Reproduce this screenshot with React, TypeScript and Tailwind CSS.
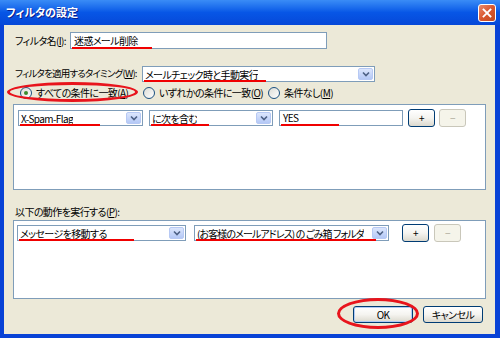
import React from "react";

const font = "font-['MS_UI_Gothic','Noto_Sans_CJK_JP',sans-serif] [font-feature-settings:'palt'] tracking-[-0.6px]";

type MarkProps = { w: number; left?: number };

// red hand-drawn underline from the annotation
const Underline = ({ w, left = 1 }: MarkProps) => (
  <span
    className="absolute bottom-[-1px] h-[2px] bg-[#F00000]"
    style={{ width: w, left }}
  />
);

const Arrow = () => (
  <span className="flex h-full w-[15px] shrink-0 items-center justify-center rounded-[2px] border border-[#B7C9F4] bg-gradient-to-b from-[#DCE6FC] to-[#B4C8F6]">
    <svg width="8" height="6" viewBox="0 0 8 6">
      <path d="M1 1.5 L4 4.5 L7 1.5" fill="none" stroke="#4D6185" strokeWidth="1.6" />
    </svg>
  </span>
);

const Select = ({ text, w, line, tight }: { text: string; w: number; line?: number; tight?: boolean }) => (
  <div
    className="relative flex h-[16px] shrink-0 items-center justify-between gap-[1px] border border-[#7F9DB9] bg-white py-[1px] pl-[2px] pr-[1px]"
    style={{ width: w }}
  >
    <span
      className={
        "overflow-hidden whitespace-nowrap text-[10px] leading-[13px] text-black" +
        (tight ? " tracking-[-0.9px]" : "")
      }
    >
      {text}
    </span>
    <Arrow />
    {line ? <Underline w={line} /> : null}
  </div>
);

const Btn = ({ label, w, h, disabled, focus }: { label: string; w: number; h: number; disabled?: boolean; focus?: boolean }) => (
  <div
    className={
      "flex shrink-0 items-center justify-center whitespace-nowrap rounded-[3px] border text-[10px] leading-none " +
      (disabled
        ? "border-[#C9C7BA] bg-[#F5F4EA] text-[#ACA899]"
        : "border-[#003C74] bg-gradient-to-b from-white via-[#F5F4F0] to-[#DCD9CE] text-black") +
      (focus ? " shadow-[inset_0_0_0_1px_#B2CBF4]" : "")
    }
    style={{ width: w, height: h }}
  >
    {label}
  </div>
);

const Radio = ({ checked }: { checked?: boolean }) => (
  <span className="flex h-[12px] w-[12px] shrink-0 items-center justify-center rounded-full border border-[#1C5180] bg-gradient-to-br from-[#DCDCD6] to-white">
    {checked && <span className="h-[4px] w-[4px] rounded-full bg-[#3B8B2D]" />}
  </span>
);

export default function App() {
  return (
    <div className={"flex h-[338px] w-[500px] flex-col overflow-hidden bg-[#0842D6] " + font}>
      {/* title bar */}
      <div className="flex h-[25px] shrink-0 items-center justify-between bg-gradient-to-b from-[#3A8CF6] via-[#0756E6] to-[#0648D8] pl-[6px] pr-[4px]">
        <span className="whitespace-nowrap text-[11px] font-bold leading-none tracking-normal text-white [text-shadow:1px_1px_0_#0A1E8C]">
          フィルタの設定
        </span>
        <span className="flex h-[18px] w-[18px] items-center justify-center rounded-[3px] border border-white bg-gradient-to-br from-[#E98A6B] via-[#D9572E] to-[#C14A21]">
          <svg width="10" height="10" viewBox="0 0 10 10">
            <path d="M1.5 1.5 L8.5 8.5 M8.5 1.5 L1.5 8.5" stroke="white" strokeWidth="1.8" strokeLinecap="square" />
          </svg>
        </span>
      </div>

      {/* body */}
      <div className="relative mb-[4px] ml-[4px] mr-[5px] flex flex-1 flex-col whitespace-nowrap bg-[#ECE9D8] px-[9px] text-[10px] text-black">
        {/* filter name */}
        <div className="mt-[7px] flex h-[17px] items-center">
          <span className="w-[57px] shrink-0 pl-[2px] leading-none">フィルタ名(<u>I</u>):</span>
          <div className="relative flex h-[17px] w-[257px] items-center border border-[#7F9DB9] bg-white pl-[3px]">
            <span className="leading-none">迷惑メール削除</span>
            <Underline w={80} />
          </div>
        </div>

        {/* timing */}
        <div className="mt-[17px] flex h-[16px] items-center">
          <span className="w-[129px] shrink-0 pl-[2px] text-[9.5px] leading-none tracking-[-0.8px]">
            フィルタを適用するタイミング(<u>W</u>):
          </span>
          <Select text="メールチェック時と手動実行" w={233} line={122} />
        </div>

        {/* radios */}
        <div className="relative mt-[2px] flex h-[18px] items-center">
          <span className="flex w-[130px] shrink-0 items-center gap-[4px] pl-[7px] leading-none">
            <Radio checked />
            <span>すべての条件に一致(<u>A</u>)</span>
          </span>
          <span className="flex w-[125px] shrink-0 items-center gap-[4px] leading-none">
            <Radio />
            <span>いずれかの条件に一致(<u>O</u>)</span>
          </span>
          <span className="flex shrink-0 items-center gap-[4px] leading-none">
            <Radio />
            <span>条件なし(<u>M</u>)</span>
          </span>
          <span className="absolute left-[-6px] top-[-2px] h-[20px] w-[131px] rounded-[50%] border-[3px] border-[#E8141C]" />
        </div>

        {/* conditions box */}
        <div className="mt-[2px] h-[86px] shrink-0 border border-[#7F9DB9] bg-white pl-[4px] pt-[4px]">
          <div className="flex items-center">
            <Select text="X-Spam-Flag" w={125} line={80} />
            <div className="ml-[6px]">
              <Select text="に次を含む" w={124} line={58} />
            </div>
            <div className="relative ml-[6px] flex h-[16px] w-[124px] shrink-0 items-center border border-[#7F9DB9] bg-white pl-[3px]">
              <span className="leading-none">YES</span>
              <Underline w={58} />
            </div>
            <div className="ml-[5px]">
              <Btn label="+" w={27} h={18} />
            </div>
            <div className="ml-[4px]">
              <Btn label="−" w={27} h={18} disabled />
            </div>
          </div>
        </div>

        {/* actions */}
        <div className="mt-[14px] flex h-[16px] items-center pl-[2px] leading-none">
          <span>以下の動作を実行する(<u>P</u>):</span>
        </div>
        <div className="h-[79px] shrink-0 border border-[#7F9DB9] bg-white pl-[3px] pt-[3px]">
          <div className="flex items-center">
            <Select text="メッセージを移動する" w={169} line={115} />
            <div className="ml-[8px]">
              <Select text="(お客様のメールアドレス) の ごみ箱 フォルダ" w={195} line={180} tight />
            </div>
            <div className="ml-[13px]">
              <Btn label="+" w={27} h={18} />
            </div>
            <div className="ml-[5px]">
              <Btn label="−" w={27} h={18} disabled />
            </div>
          </div>
        </div>

        {/* footer buttons */}
        <div className="relative mt-[7px] flex h-[17px] justify-end gap-[10px] pr-[3px]">
          <Btn label="OK" w={60} h={17} focus />
          <Btn label="キャンセル" w={60} h={17} />
          <span className="absolute left-[324px] top-[-8px] h-[31px] w-[82px] rounded-[50%] border-[3px] border-[#E8141C]" />
        </div>
      </div>
    </div>
  );
}
